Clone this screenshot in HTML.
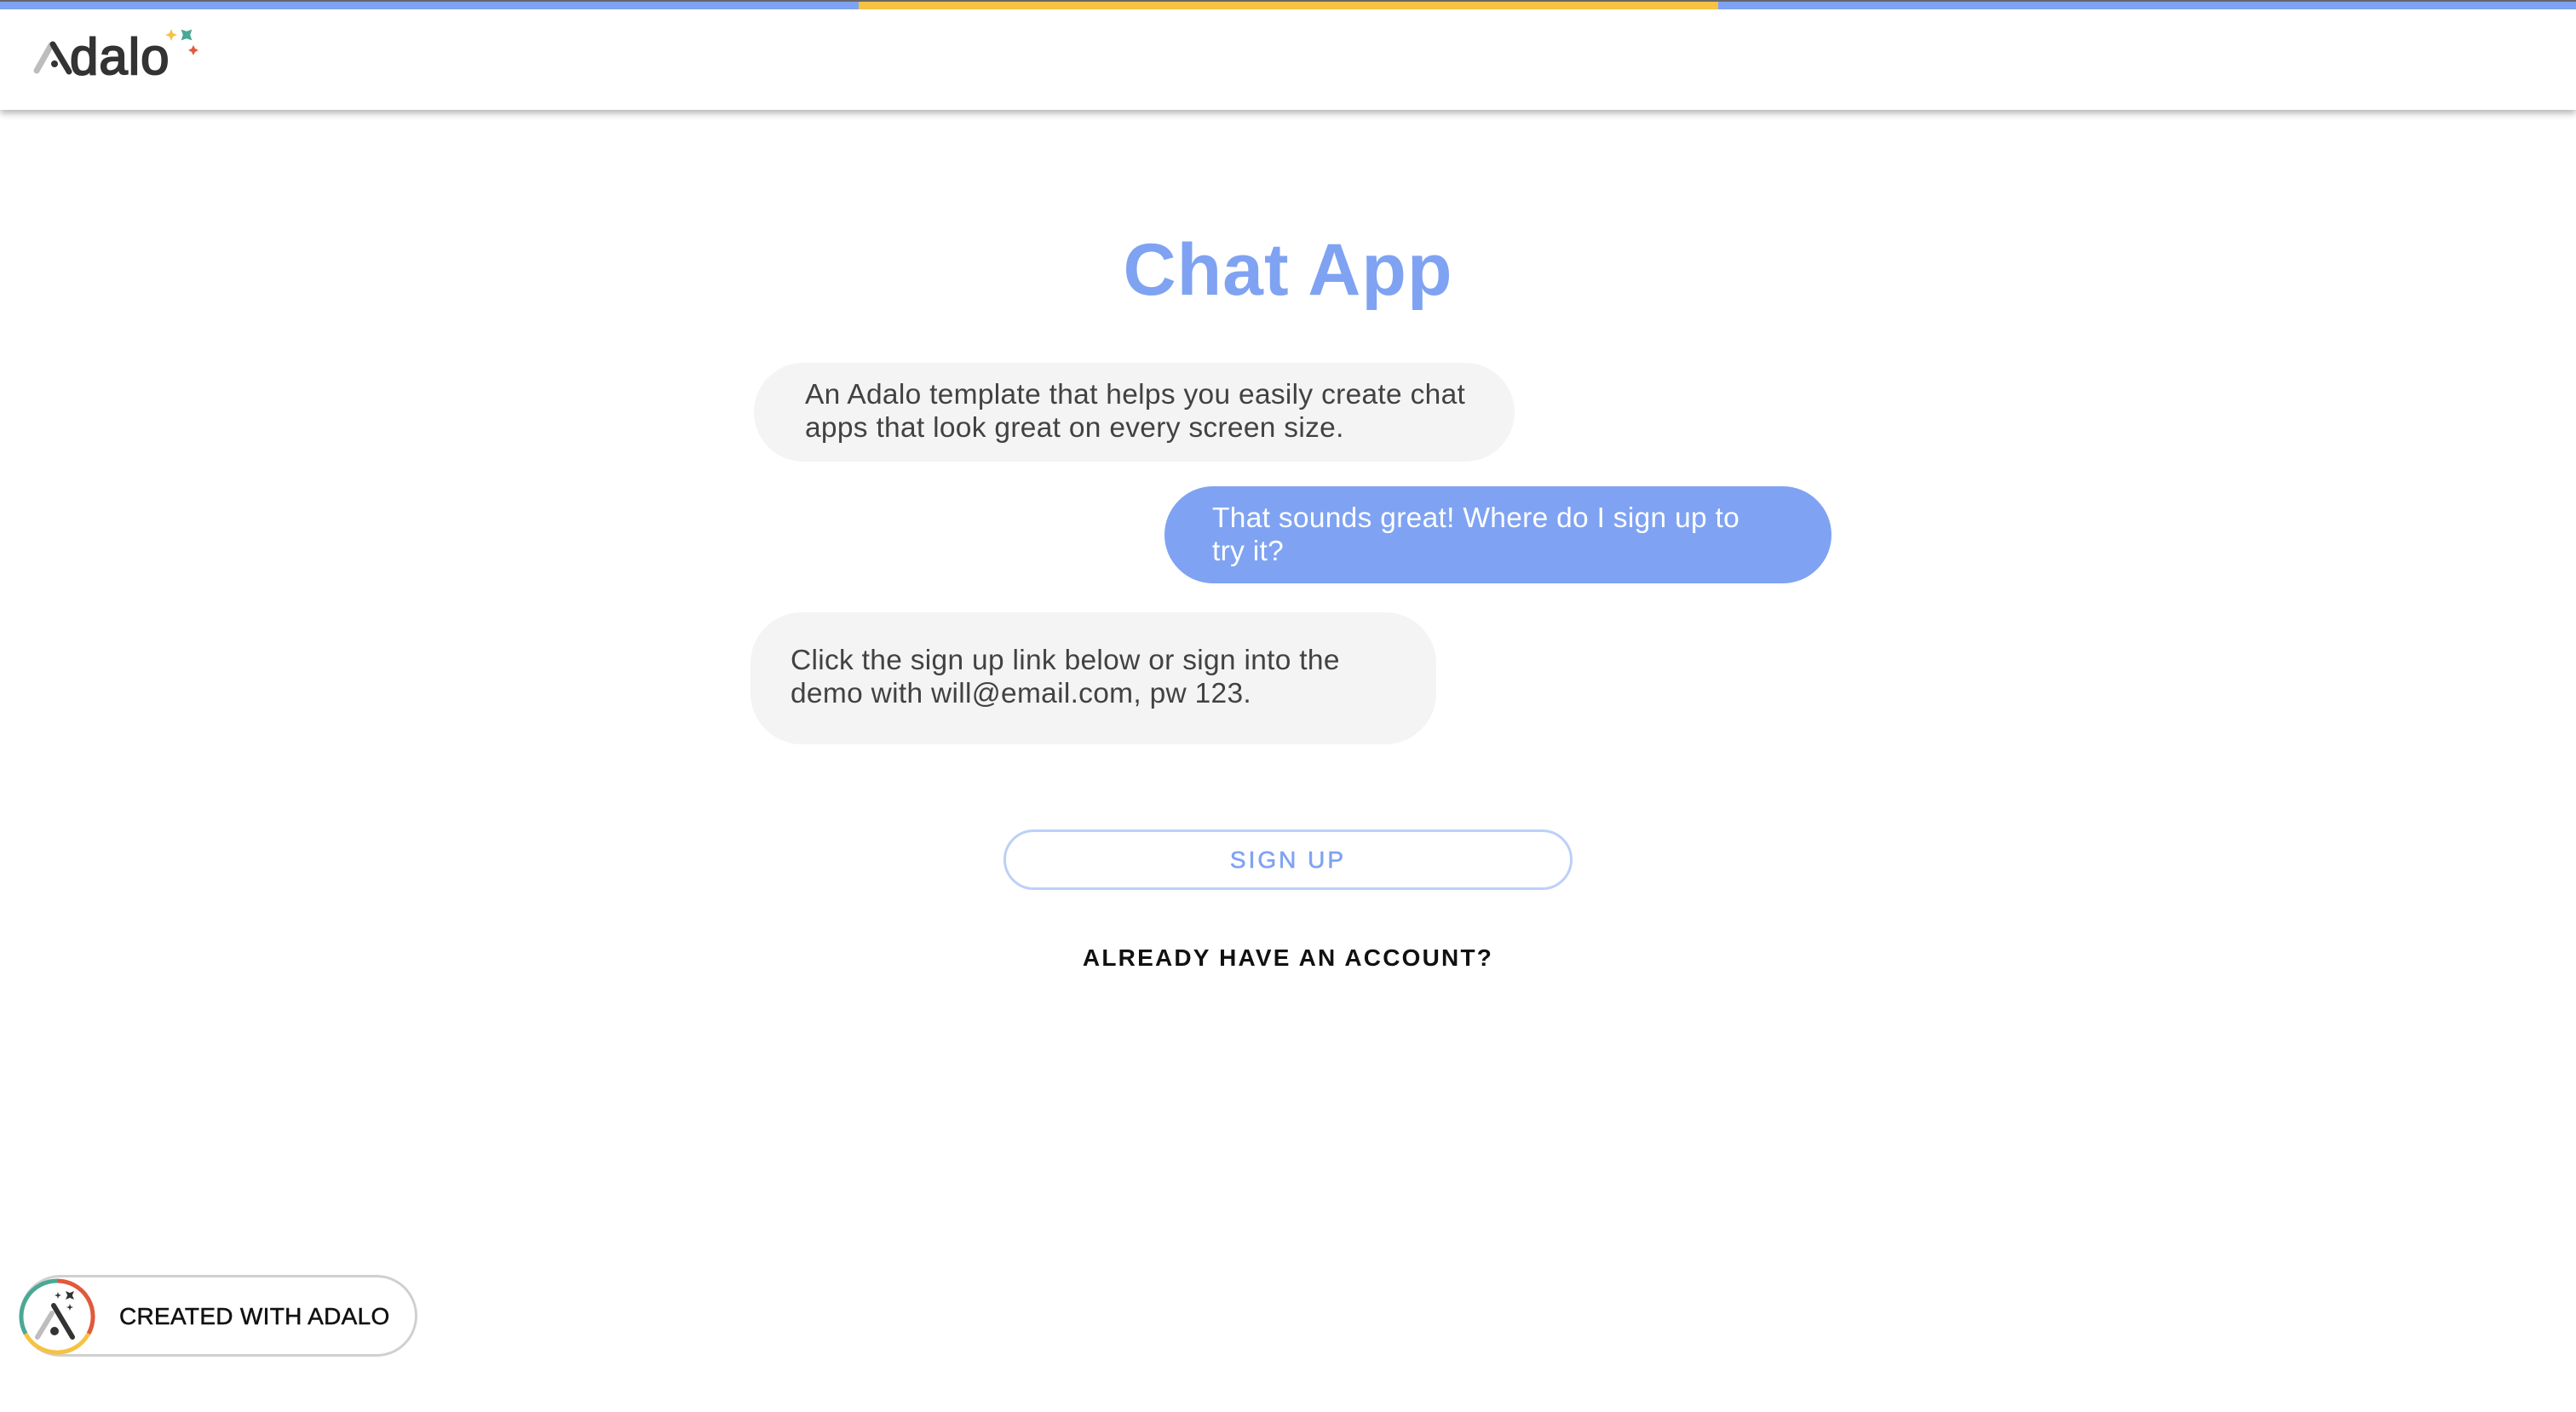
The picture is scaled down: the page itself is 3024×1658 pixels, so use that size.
<!DOCTYPE html>
<html><head><meta charset="utf-8"><style>
*{margin:0;padding:0;box-sizing:border-box}
html,body{width:3024px;height:1658px;overflow:hidden;background:#fff;font-family:"Liberation Sans",sans-serif}
.topline{position:absolute;left:0;top:0;width:3024px;height:2px;background:#666}
.bar{position:absolute;top:2px;height:9px;background:#7fa3f2}
.header{position:absolute;left:0;top:0;width:3024px;height:129px;background:#fff;box-shadow:0 4px 8px rgba(0,0,0,.3)}
.title{position:absolute;left:0;width:3024px;top:268px;text-align:center;font-size:86px;font-weight:bold;color:#7fa3f2;letter-spacing:1px}
.b{position:absolute;border-radius:60px;font-size:33.5px;line-height:38.5px;color:#424242;letter-spacing:0.3px}
.b p{position:absolute}
.btn{position:absolute;left:1178px;top:974px;width:668px;height:71px;border:3px solid #bcd0f8;border-radius:36px;text-align:center;line-height:65px;font-size:28px;color:#7fa3f2;letter-spacing:3px;-webkit-text-stroke:0.6px #7fa3f2}
.already{position:absolute;left:0;width:3024px;top:1109px;text-align:center;font-size:28px;font-weight:bold;letter-spacing:2.2px;color:#111}
.badge{position:absolute;left:23px;top:1497px;width:467px;height:96px;border:3px solid #d0d0d0;border-radius:48px;background:#fff}
.badge span{position:absolute;left:114px;top:30px;font-size:28px;letter-spacing:0.3px;color:#111;-webkit-text-stroke:0.5px #111}
</style></head><body>
<div class="header"></div>
<div class="topline"></div>
<div class="bar" style="left:0;width:1008px"></div>
<div class="bar" style="left:1008px;width:1009px;background:#f6c244"></div>
<div class="bar" style="left:2017px;width:1007px"></div>
<svg style="position:absolute;left:38px;top:30px" width="200" height="64" viewBox="0 0 200 64">
<line x1="5" y1="53" x2="22" y2="23" stroke="#bdbdbd" stroke-width="7" stroke-linecap="round"/>
<line x1="24" y1="22" x2="43" y2="54" stroke="#333" stroke-width="7" stroke-linecap="round"/>
<circle cx="26" cy="45" r="4" fill="#333"/>
<text x="44" y="57" font-family="Liberation Sans" font-size="60" fill="#333" stroke="#333" stroke-width="2" letter-spacing="1">dalo</text>
<path d="M163 4l2 5 5 2-5 2-2 5-2-5-5-2 5-2z" fill="#f6c244"/>
<path d="M181 2l3 6 6 3-6 3-3 6-3-6-6-3 6-3z" fill="#4aa895" transform="rotate(45 181 11)"/>
<path d="M189 23l2 4 4 2-4 2-2 4-2-4-4-2 4-2z" fill="#e05a3c"/>
</svg>
<div class="title">Chat App</div>
<div class="b" style="left:885px;top:426px;width:893px;height:116px;background:#f4f4f4"><p style="left:60px;top:19px">An Adalo template that helps you easily create chat<br>apps that look great on every screen size.</p></div>
<div class="b" style="left:1367px;top:571px;width:783px;height:114px;background:#7fa3f2;color:#fff"><p style="left:56px;top:19px">That sounds great! Where do I sign up to<br>try it?</p></div>
<div class="b" style="left:881px;top:719px;width:805px;height:155px;background:#f4f4f4"><p style="left:47px;top:38px">Click the sign up link below or sign into the<br>demo with will@email.com, pw 123.</p></div>
<div class="btn">SIGN UP</div>
<div class="already">ALREADY HAVE AN ACCOUNT?</div>
<div class="badge"><span>CREATED WITH ADALO</span></div>
<svg style="position:absolute;left:21px;top:1500px" width="92" height="92" viewBox="0 0 92 92">
<path d="M46 4A42 42 0 0 1 83 66" fill="none" stroke="#e05a3c" stroke-width="5"/>
<path d="M83 66A42 42 0 0 1 9 66" fill="none" stroke="#f6c244" stroke-width="5"/>
<path d="M9 66A42 42 0 0 1 46 4" fill="none" stroke="#4aa895" stroke-width="5"/>
<line x1="23" y1="70" x2="40" y2="42" stroke="#bdbdbd" stroke-width="6" stroke-linecap="round"/>
<line x1="42" y1="33" x2="64" y2="70" stroke="#333" stroke-width="6" stroke-linecap="round"/>
<circle cx="43" cy="63" r="5" fill="#333"/>
<path d="M61 14l2 5 5 2-5 2-2 5-2-5-5-2 5-2z" fill="#333" transform="rotate(45 61 21)"/>
<path d="M47 17l1 3 3 1-3 1-1 3-1-3-3-1 3-1z" fill="#333"/>
<path d="M61 31l1 3 3 1-3 1-1 3-1-3-3-1 3-1z" fill="#333"/>
</svg>
</body></html>
